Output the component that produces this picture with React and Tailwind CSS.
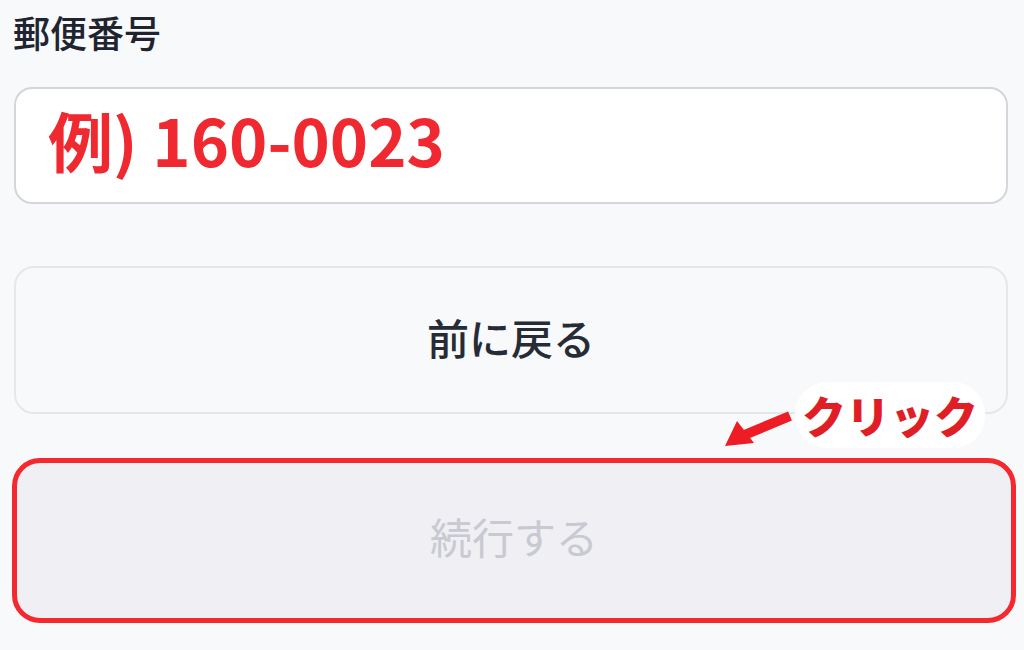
export default function App() {
  const font = { fontFamily: '"Noto Sans CJK JP", "Noto Sans", sans-serif' };
  return (
    <div className="relative w-[1024px] h-[650px] bg-[#f8f9fb] overflow-hidden" style={font}>
      <div className="flex flex-col">
        <div className="h-[64px] flex items-center pl-[13px] text-[37px] leading-none text-[#20242e] font-medium">
          郵便番号
        </div>
        <div className="mt-[23px] ml-[14px] w-[994px] h-[117px] rounded-[18px] border-2 border-[#d5d6db] bg-white flex items-center pl-[32px] pb-[12px]">
          <span className="text-[65px] leading-none font-bold text-[#f0282f]">例) 160-0023</span>
        </div>
        <div className="mt-[62px] ml-[14px] w-[994px] h-[148px] rounded-[20px] border-2 border-[#e6e7eb] bg-[#f8f9fb] flex items-center justify-center pb-[6px]">
          <span className="text-[42px] leading-none font-medium text-[#272b35]">前に戻る</span>
        </div>
        <div className="mt-[44px] ml-[12px] w-[1004px] h-[165px] rounded-[28px] border-[5px] border-[#f4282e] bg-[#efeff4] flex items-center justify-center pb-[10px]">
          <span className="text-[42px] leading-none text-[#c8c9d1]">続行する</span>
        </div>
      </div>

      <div className="absolute left-[795px] top-[382px] w-[190px] h-[66px] rounded-[32px] bg-white flex items-center justify-center">
        <span className="text-[44px] leading-none font-black text-[#e01e25]">クリック</span>
      </div>
      <svg className="absolute left-[720px] top-[405px]" width="80" height="50" viewBox="0 0 80 50">
        <line x1="70" y1="11" x2="22" y2="31" stroke="#ee1c24" strokeWidth="10" strokeLinecap="butt" />
        <polygon points="5,41 17,16 34,38" fill="#ee1c24" />
      </svg>
    </div>
  );
}
